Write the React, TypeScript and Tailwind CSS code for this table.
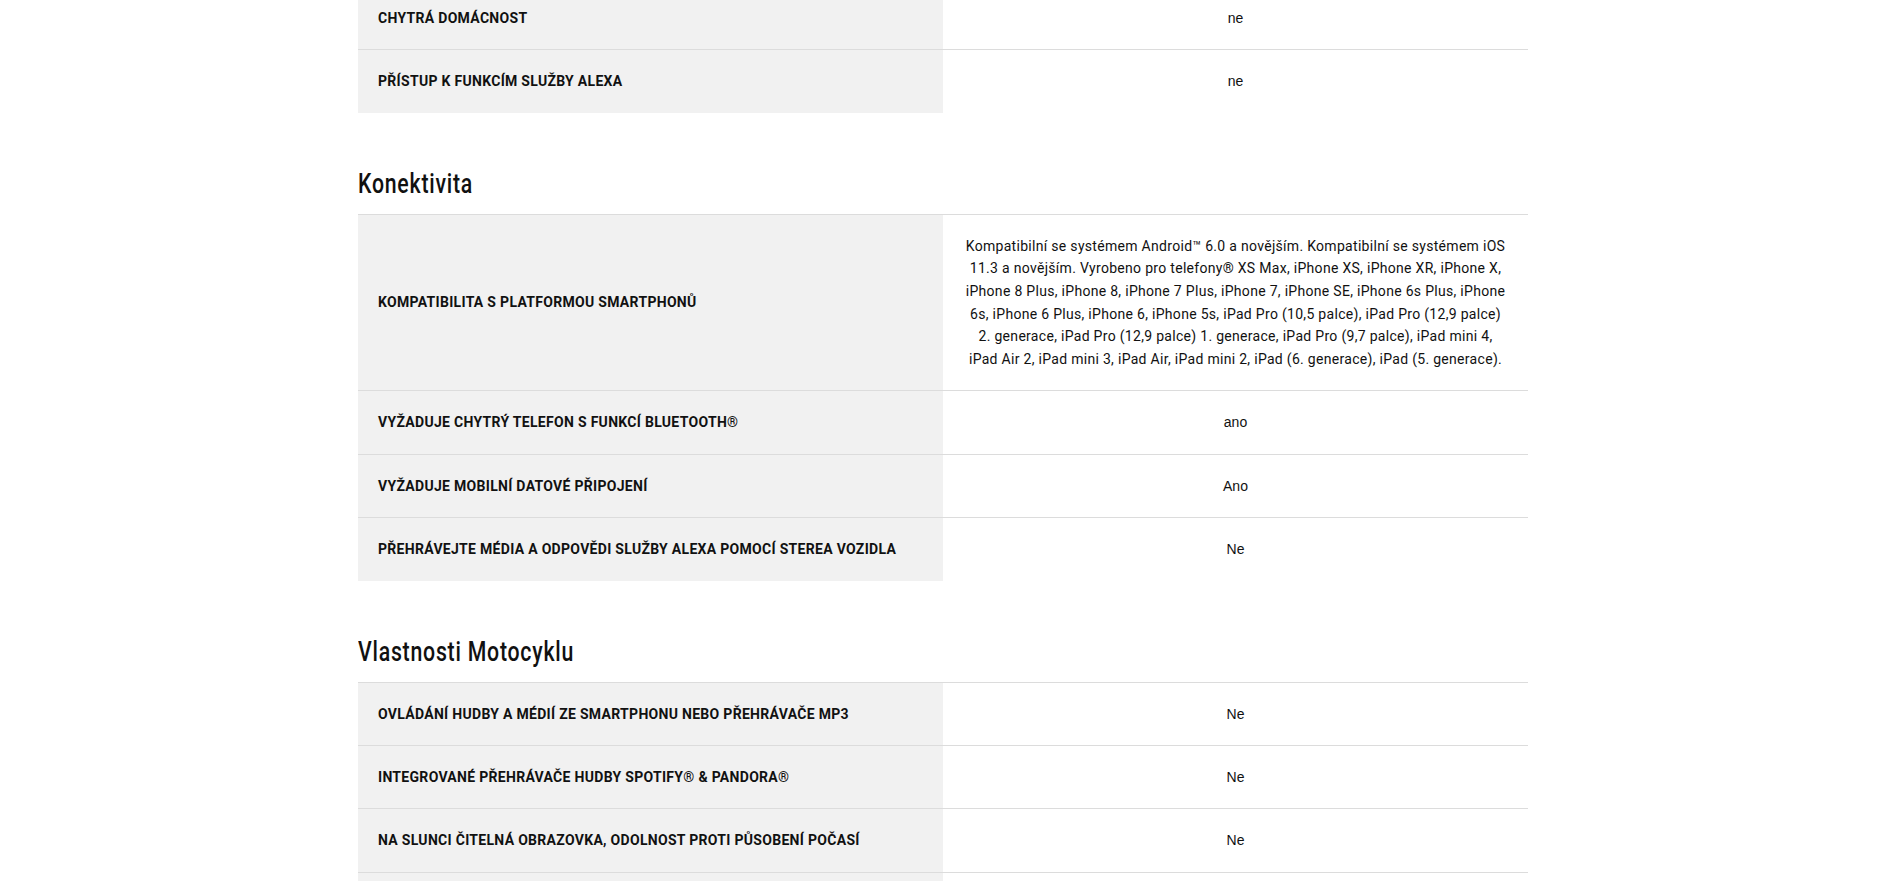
import React from "react";

type Row = { label: string; value: string; long?: boolean };

const sections: { title?: string; rows: Row[]; first?: boolean }[] = [
  {
    first: true,
    rows: [
      { label: "Chytrá domácnost", value: "ne" },
      { label: "Přístup k funkcím služby Alexa", value: "ne" },
    ],
  },
  {
    title: "Konektivita",
    rows: [
      {
        label: "Kompatibilita s platformou smartphonů",
        value:
          "Kompatibilní se systémem Android™ 6.0 a novějším. Kompatibilní se systémem iOS 11.3 a novějším. Vyrobeno pro telefony® XS Max, iPhone XS, iPhone XR, iPhone X, iPhone 8 Plus, iPhone 8, iPhone 7 Plus, iPhone 7, iPhone SE, iPhone 6s Plus, iPhone 6s, iPhone 6 Plus, iPhone 6, iPhone 5s, iPad Pro (10,5 palce), iPad Pro (12,9 palce) 2. generace, iPad Pro (12,9 palce) 1. generace, iPad Pro (9,7 palce), iPad mini 4, iPad Air 2, iPad mini 3, iPad Air, iPad mini 2, iPad (6. generace), iPad (5. generace).",
        long: true,
      },
      { label: "Vyžaduje chytrý telefon s funkcí Bluetooth®", value: "ano" },
      { label: "Vyžaduje mobilní datové připojení", value: "Ano" },
      { label: "Přehrávejte média a odpovědi služby Alexa pomocí sterea vozidla", value: "Ne" },
    ],
  },
  {
    title: "Vlastnosti Motocyklu",
    rows: [
      { label: "Ovládání hudby a médií ze smartphonu nebo přehrávače MP3", value: "Ne" },
      { label: "Integrované přehrávače hudby Spotify® & Pandora®", value: "Ne" },
      { label: "Na slunci čitelná obrazovka, odolnost proti působení počasí", value: "Ne" },
      { label: "Vodotěsnost", value: "IPX7" },
    ],
  },
];

function Table({ rows, first }: { rows: Row[]; first?: boolean }) {
  return (
    <div className={`border-t border-[#dcdcdc] ${first ? "-mt-[14px]" : ""}`}>
      {rows.map((r, i) => (
        <div
          key={i}
          className={`grid grid-cols-2 ${i < rows.length - 1 ? "border-b border-[#dcdcdc]" : ""}`}
        >
          <div className="flex items-center bg-[#f1f1f1] px-5 py-5">
            <span className="font-['Roboto',sans-serif] text-[14px] font-bold uppercase leading-[22.4px] tracking-[0.3px] text-[#111]">
              {r.label}
            </span>
          </div>
          <div className="flex items-center justify-center px-5 py-5 text-center">
            {r.long ? (
              <span className="font-['Roboto',sans-serif] text-[14px] leading-[22.6px] tracking-[0.3px] text-[#111]">
                {r.value}
              </span>
            ) : (
              <span className="font-['Liberation_Sans',Arial,sans-serif] text-[14px] leading-[22.4px] text-[#111]">
                {r.value}
              </span>
            )}
          </div>
        </div>
      ))}
    </div>
  );
}

export default function App() {
  return (
    <div className="h-[881px] overflow-hidden bg-white">
      <div className="ml-[358px] w-[1170px]">
        {sections.map((s, i) => (
          <div key={i}>
            {s.title && (
              <div className="mt-[55px] mb-[14px] h-[32px] overflow-visible">
                <h2 className="inline-block origin-left scale-x-[0.76] whitespace-nowrap font-['Roboto',sans-serif] text-[28px] font-medium leading-[32px] tracking-[1px] text-[#111]">
                  {s.title}
                </h2>
              </div>
            )}
            <Table rows={s.rows} first={s.first} />
          </div>
        ))}
      </div>
    </div>
  );
}
